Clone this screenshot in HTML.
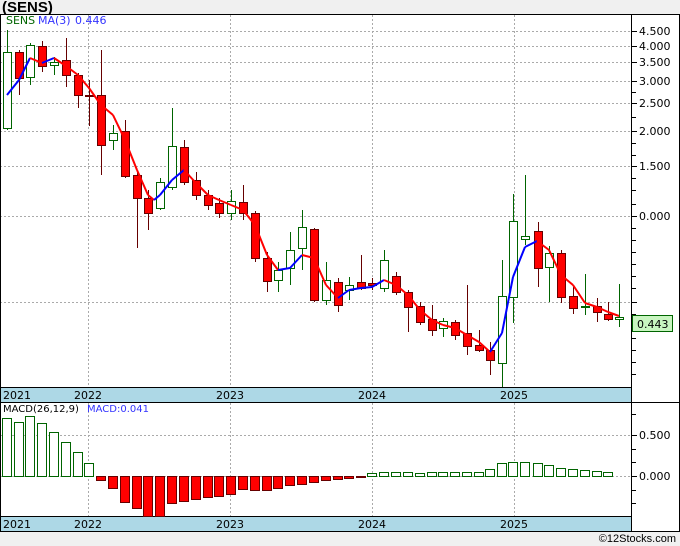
<!DOCTYPE html>
<html><head><meta charset="utf-8"><style>
html,body{margin:0;padding:0;background:#f0f0f0;width:680px;height:546px;overflow:hidden;font-family:"Liberation Sans","DejaVu Sans",sans-serif}
</style></head><body>
<svg id="s" width="680" height="546" xmlns="http://www.w3.org/2000/svg" font-family="'DejaVu Sans','Liberation Sans',sans-serif">
<rect x="0" y="0" width="680" height="546" fill="#f0f0f0"/>
<text x="2" y="12" font-size="15" font-weight="bold" fill="#000" font-family="'Liberation Sans',sans-serif">(SENS)</text>
<rect x="0" y="14" width="680" height="517" fill="#fff"/>
<g id="g"></g>
<text x="676" y="542" font-size="11" fill="#000" text-anchor="end" font-family="'Liberation Sans',sans-serif">©12Stocks.com</text>
</svg>
<script>
var g=document.getElementById('g'),h='';
function L(x1,y1,x2,y2,c,w,d){h+='<line x1="'+x1+'" y1="'+y1+'" x2="'+x2+'" y2="'+y2+'" stroke="'+c+'" stroke-width="'+(w||1)+'"'+(d?' stroke-dasharray="'+d+'"':'')+'/>';}
function R(x,y,w,hh,f,s){h+='<rect x="'+x+'" y="'+y+'" width="'+w+'" height="'+hh+'" fill="'+f+'" stroke="'+s+'" stroke-width="1"/>';}
function T(x,y,t,c,sz,a){h+='<text x="'+x+'" y="'+y+'" font-size="'+(sz||11)+'" fill="'+c+'"'+(a?' text-anchor="'+a+'"':'')+'>'+t+'</text>';}
var yrs=[88,230,372,514];
yrs.forEach(function(x){L(x+.5,15,x+.5,387,'#aaa',1,'2,2');L(x+.5,403,x+.5,516,'#aaa',1,'2,2');});
var pg=[[31,'4.500'],[46,'4.000'],[62,'3.500'],[81,'3.000'],[103,'2.500'],[131,'2.000'],[166,'1.500'],[216,'0.000'],[302,'']];
pg.forEach(function(p){L(0,p[0]+.5,632,p[0]+.5,'#aaa',1,'2,2');L(632,p[0]+.5,637,p[0]+.5,'#000');if(p[1])T(639,p[0]+4,p[1],'#000',11);});
[92,117,143,155,178,190,204,228,240,252,264,276,288,314,326,338,350,362,374].forEach(function(y){L(632,y+.5,636,y+.5,'#000');});
var C=[[7,'g',52,128,30,130],[19,'r',52,78,50,95],[30,'g',45,77,43,85],[42,'r',46,66,41,72],[54,'g',62,65,57,75],[66,'r',60,75,38,87],[78,'r',75,95,73,108],[89,'r',95,96,80,126],[101,'r',95,145,50,175],[113,'g',133,140,125,150],[125,'r',131,176,120,178],[137,'r',175,198,170,248],[148,'r',198,213,190,230],[160,'g',182,208,178,210],[172,'g',146,187,108,190],[184,'r',147,182,140,185],[196,'r',180,195,172,200],[208,'r',195,205,190,210],[219,'r',203,213,198,218],[231,'g',201,213,190,220],[243,'r',202,213,185,220],[255,'r',213,258,211,262],[267,'r',258,281,252,292],[278,'g',270,280,262,292],[290,'g',250,268,232,285],[302,'g',227,248,210,270],[314,'r',229,300,228,302],[326,'g',280,300,262,305],[338,'r',282,305,278,312],[349,'g',285,290,277,300],[361,'r',282,288,255,290],[372,'r',283,285,278,290],[384,'g',260,288,250,292],[396,'r',276,292,272,295],[408,'r',292,307,290,332],[420,'r',306,322,302,325],[432,'r',319,330,305,336],[443,'g',321,328,318,337],[455,'r',322,335,320,340],[467,'r',333,346,285,355],[479,'r',345,350,330,352],[490,'r',350,360,342,375],[502,'g',296,363,260,390],[513,'g',221,297,194,323],[525,'g',236,239,175,245],[538,'r',231,268,222,287],[549,'g',253,267,246,302],[561,'r',253,297,250,303],[573,'r',296,308,287,314],[585,'g',306,307,274,315],[597,'r',306,312,298,322],[608,'r',314,319,302,321],[619,'g',317,319,284,327]];
C.forEach(function(c){var x=c[0],gr=c[1]=='g';var col=gr?'#006400':'#660000';L(x+.5,c[4],x+.5,c[5],col);R(x-3.5,c[2]+.5,8,Math.max(1,c[3]-c[2]),gr?'#fff':'#f00',gr?'#006400':'#660000');});
var M=[[7,95],[19,80],[30,58],[42,63],[54,58],[66,66],[78,75],[89,88],[101,105],[113,115],[125,140],[137,170],[148,195],[154,200],[160,195],[172,180],[184,170],[196,183],[208,195],[219,200],[231,205],[243,210],[255,225],[267,255],[278,270],[290,268],[302,255],[314,258],[326,285],[338,298],[349,290],[361,288],[372,287],[384,280],[396,285],[408,295],[420,310],[432,320],[443,325],[455,328],[467,335],[479,342],[490,352],[502,333],[513,277],[525,247],[537,241],[549,250],[561,275],[573,285],[585,303],[597,307],[608,312],[619,316]];
for(var i=1;i<M.length;i++){var a=M[i-1],b=M[i];L(a[0],a[1],b[0],b[1],b[1]<a[1]?'#0000ff':'#ff0000',2);}
T(6,24,'SENS','#006400',11);T(38,24,'MA(3)','#3333ff',11);T(75,24,'0.446','#3333ff',11);
R(632.5,315.5,40,16,'#c8f5c0','#006400');T(637,328,'0.443','#000',11);
R(0,387.5,631.5,15,'#add8e6','#000');R(0,516.5,631.5,15,'#add8e6','#000');
[[3,'2021'],[74,'2022'],[216,'2023'],[358,'2024'],[500,'2025']].forEach(function(t){T(t[0],399,t[1],'#000',11);T(t[0],528,t[1],'#000',11);});
L(0,435.5,632,435.5,'#aaa',1,'2,2');L(0,476.5,632,476.5,'#aaa',1,'2,2');
L(632,435.5,637,435.5,'#000');L(632,476.5,637,476.5,'#000');T(639,439,'0.500','#000',11);T(639,480,'0.000','#000',11);
[414,449,462,490,503].forEach(function(y){L(632,y+.5,636,y+.5,'#000');});
var P=[418,422,416,423,432,442,452,463],N=[480,488,502,508,516,516,503,501,499,497,496,494,489,490,490,488,485,484,482,480,479,478,477],Q=[473,472,472,472,473,472,472,472,472,472,469,463,462,462,463,465,468,469,470,471,472];
var vals=P.concat(N).concat(Q);
vals.forEach(function(v,i){var x=C[i][0];if(i<8||i>=31){R(x-4.5,v+.5,9,476-v,'#fff','#006400');}else{R(x-4.5,476.5,9,Math.max(1,v-476),'#f00','#660000');}});
T(3,412,'MACD(26,12,9)','#000',10);T(87,412,'MACD:0.041','#3333ff',10);
L(0,14.5,680,14.5,'#000');L(631.5,14,631.5,531,'#000');L(679.5,14,679.5,531,'#000');L(0,402.5,680,402.5,'#000');L(0,531.5,680,531.5,'#000');L(0.5,14,0.5,531,'#000');
g.innerHTML=h;
</script>
</body></html>
